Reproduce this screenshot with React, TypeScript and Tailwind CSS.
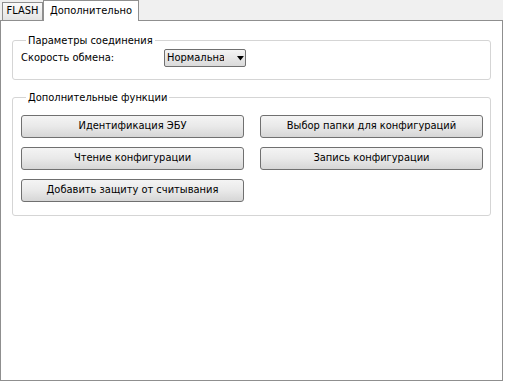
import React from "react";

const font = { fontFamily: '"DejaVu Sans Condensed", "DejaVu Sans", sans-serif' };

function Btn({ label }: { label: string }) {
  return (
    <button className="h-[23px] w-[223px] rounded-[3px] border border-[#707070] bg-gradient-to-b from-[#f4f4f4] via-[#e9e9e9] to-[#d6d6d6] text-[11px] text-black">
      {label}
    </button>
  );
}

function Group({ title, children, className }: { title: string; children: React.ReactNode; className?: string }) {
  return (
    <fieldset className={`rounded-[3px] border border-[#d5d5d5] pl-[8px] pr-[7px] ${className ?? ""}`}>
      <legend className="ml-[5px] px-[2px] text-[11px] leading-[13px] text-black">{title}</legend>
      {children}
    </fieldset>
  );
}

export default function App() {
  return (
    <div className="h-[382px] w-[505px] bg-white text-[11px] text-black" style={font}>
      <div className="flex h-[20px] w-[503px] items-end bg-[#f0f0f0]">
        <div className="ml-[2px] flex h-[18px] w-[41px] items-center justify-center border border-b-0 border-[#8f8f8f] bg-gradient-to-b from-[#fafafa] to-[#e4e4e4]">
          FLASH
        </div>
        <div className="relative top-[1px] flex h-[21px] w-[96px] items-center justify-center border border-b-0 border-[#8f8f8f] bg-white">
          Дополнительно
        </div>
      </div>
      <div className="h-[361px] w-[503px] border border-[#8f8f8f] bg-white px-[11px] pt-[13px]">
        <Group title="Параметры соединения" className="h-[46px]">
          <div className="flex items-center pt-[2px]">
            <span className="w-[143px] whitespace-nowrap">Скорость обмена:</span>
            <div className="flex h-[18px] w-[82px] items-center rounded-[2px] border border-[#707070] bg-gradient-to-b from-[#f4f4f4] to-[#dadada] pl-[2px]">
              <span className="w-[58px] overflow-hidden whitespace-nowrap text-clip">Нормальная</span>
              <svg className="ml-[13px]" width="8" height="5" viewBox="0 0 8 5">
                <path d="M0 0 H7 L3.5 4.5 Z" fill="#000" />
              </svg>
            </div>
          </div>
        </Group>
        <Group title="Дополнительные функции" className="mt-[11px] h-[125px]">
          <div className="grid grid-cols-[223px_223px] justify-between gap-y-[9px] pt-[11px]">
            <Btn label="Идентификация ЭБУ" />
            <Btn label="Выбор папки для конфигураций" />
            <Btn label="Чтение конфигурации" />
            <Btn label="Запись конфигурации" />
            <Btn label="Добавить защиту от считывания" />
          </div>
        </Group>
      </div>
    </div>
  );
}
